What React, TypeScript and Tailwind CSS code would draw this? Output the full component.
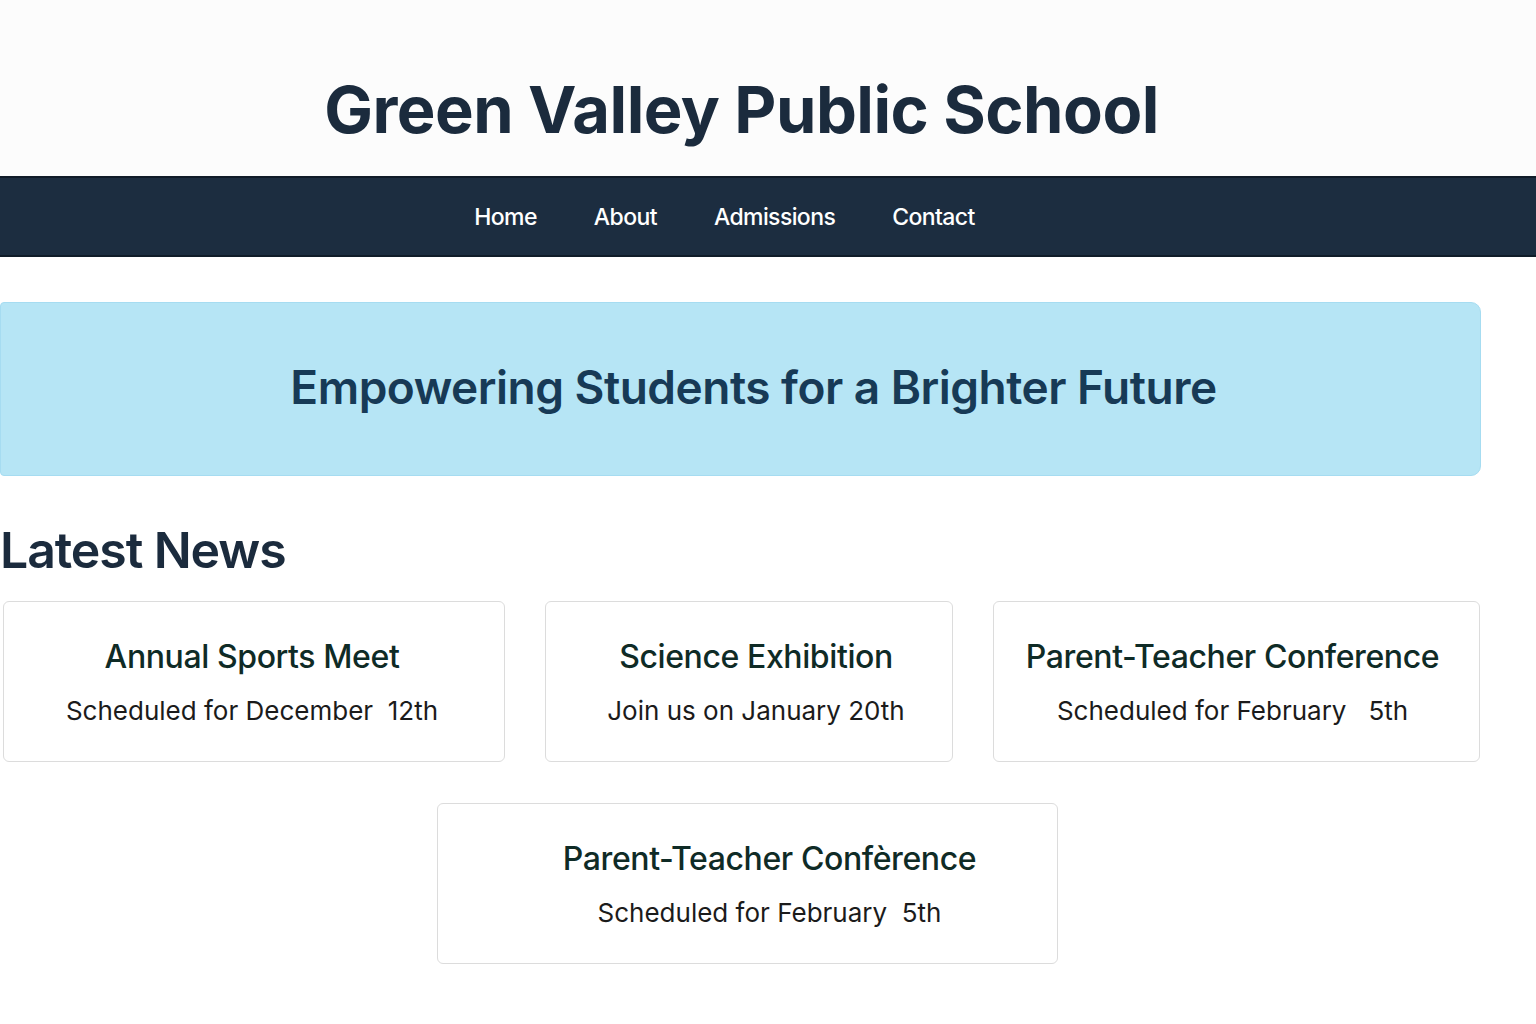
import React from "react";

type C = { t: string; s: string; w: string; off: string };

const cards1: C[] = [
  { t: "Annual Sports Meet", s: "Scheduled for December\u00a0 12th", w: "w-[502px]", off: "pr-[4px]" },
  { t: "Science Exhibition", s: "Join us on January 20th", w: "w-[408px]", off: "pl-[14px]" },
  { t: "Parent-Teacher Conference", s: "Scheduled for February \u00a0 5th", w: "w-[487px]", off: "pr-[8px]" },
];

function Card({ t, s, w, off }: C) {
  return (
    <div className={`${w} ${off} h-[161px] bg-white border border-[#dcdcdc] rounded-[6px] flex flex-col items-center pt-[35px]`}>
      <div className="text-[32px] leading-[40px] font-medium text-[#0f2b26] tracking-[-0.4px]">{t}</div>
      <div className="mt-[17px] text-[26px] leading-[33px] text-[#1b1b1b]">{s}</div>
    </div>
  );
}

export default function App() {
  return (
    <div className="min-h-[1024px] bg-white" style={{ fontFamily: "Inter, 'Noto Sans', sans-serif" }}>
      <header className="h-[176px] bg-[#fcfcfc] flex justify-center pr-[53px] pt-[74px]">
        <h1 className="text-[65px] leading-[72px] font-bold text-[#1b2b3d] tracking-[-0.5px]">Green Valley Public School</h1>
      </header>
      <nav className="h-[81px] bg-[#1c2d40] border-y-2 border-[#101c29] flex items-center justify-center gap-[57px] pr-[87px] pt-[2px]">
        {["Home", "About", "Admissions", "Contact"].map((n) => (
          <a key={n} className="text-[23px] font-medium text-white tracking-[-0.6px]">{n}</a>
        ))}
      </nav>
      <main className="w-[1481px]">
        <section className="mt-[45px] h-[174px] bg-[#b6e5f5] border border-[#a6dcf1] rounded-r-[10px] rounded-l-[4px] flex items-center justify-center pl-[26px] pb-[3px]">
          <h2 className="text-[46px] font-semibold text-[#173a56] tracking-[-0.5px]">Empowering Students for a Brighter Future</h2>
        </section>
        <h2 className="mt-[44px] text-[50px] leading-[60px] font-semibold text-[#1b2b3d] tracking-[-1.1px]">Latest News</h2>
        <div className="mt-[21px] pl-[3px] flex gap-[40px]">
          {cards1.map((c) => (
            <Card key={c.t} {...c} />
          ))}
        </div>
        <div className="mt-[41px] pl-[437px] flex">
          <Card t="Parent-Teacher Confèrence" s={"Scheduled for February\u00a0 5th"} w="w-[621px]" off="pl-[44px]" />
        </div>
      </main>
    </div>
  );
}
